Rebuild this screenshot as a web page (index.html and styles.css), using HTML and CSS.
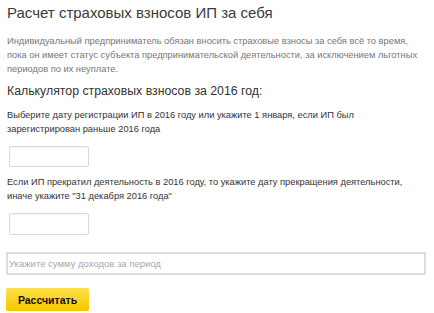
FILE: index.html
```html
<!DOCTYPE html>
<html lang="ru">
<head>
    <meta charset="UTF-8">
    <title>Расчет страховых взносов ИП за себя</title>
    <link rel="stylesheet" href="styles.css">
</head>
<body>
    <div class="page">
        <h1>Расчет страховых взносов ИП за себя</h1>
        <p class="intro">Индивидуальный предприниматель обязан вносить страховые взносы за себя всё то время, пока он имеет статус субъекта предпринимательской деятельности, за исключением льготных периодов по их неуплате.</p>
        <h2>Калькулятор страховых взносов за 2016 год:</h2>
        <div class="calc">
            <p class="label">Выберите дату регистрации ИП в 2016 году или укажите 1 января, если ИП был зарегистрирован раньше 2016 года</p>
            <input class="date-input first" type="text">
            <p class="label">Если ИП прекратил деятельность в 2016 году, то укажите дату прекращения деятельности, иначе укажите "31 декабря 2016 года"</p>
            <input class="date-input second" type="text">
            <input class="sum-input" type="text" placeholder="Укажите сумму доходов за период">
            <button class="calc-btn">Рассчитать</button>
        </div>
    </div>
</body>
</html>
```

FILE: styles.css
```css
body {
    font-family: "Liberation Sans", Arial, sans-serif;
    background-color: #fff;
    margin: 0;
    padding: 0;
}
.page {
    padding: 4px 8px 0 7px;
}
h1 {
    font-size: 15px;
    font-weight: normal;
    color: #3a3a3a;
    margin: 0;
    line-height: 18px;
}
.intro {
    font-size: 9.3px;
    line-height: 14px;
    color: #777;
    margin: 12px 0 0;
}
h2 {
    font-size: 12.3px;
    font-weight: normal;
    color: #333;
    margin: 7px 0 0;
    line-height: 16px;
}
.calc {
    display: flex;
    flex-direction: column;
    align-items: flex-start;
}
.label {
    font-size: 9.3px;
    line-height: 14px;
    color: #333;
    margin: 9px 0 0;
}
.label + .date-input + .label {
    margin-top: 8px;
}
.date-input {
    width: 80px;
    height: 22px;
    box-sizing: border-box;
    border: 1px solid #d9d9d9;
    border-radius: 2px;
    box-shadow: inset 0 1px 1px rgba(0, 0, 0, 0.04);
    margin: 0 0 0 2px;
    padding: 0;
}
.date-input.first {
    margin-top: 10px;
    height: 21px;
}
.date-input.second {
    margin-top: 10px;
}
.sum-input {
    width: 420px;
    height: 23px;
    box-sizing: border-box;
    border: 2px solid #dcdcdc;
    margin: 17px 0 0 -1px;
    padding: 0 0 0 1px;
    font-family: "Liberation Sans", Arial, sans-serif;
    font-size: 9.5px;
}
.sum-input::placeholder {
    color: #a8a8a8;
}
.calc-btn {
    margin: 13px 0 0 -1px;
    width: 83px;
    height: 23px;
    border: none;
    border-radius: 2px;
    background: linear-gradient(#ffe04a, #f7c600);
    font-family: "Liberation Sans", Arial, sans-serif;
    font-weight: bold;
    font-size: 10.5px;
    color: #111;
    cursor: pointer;
}
```
